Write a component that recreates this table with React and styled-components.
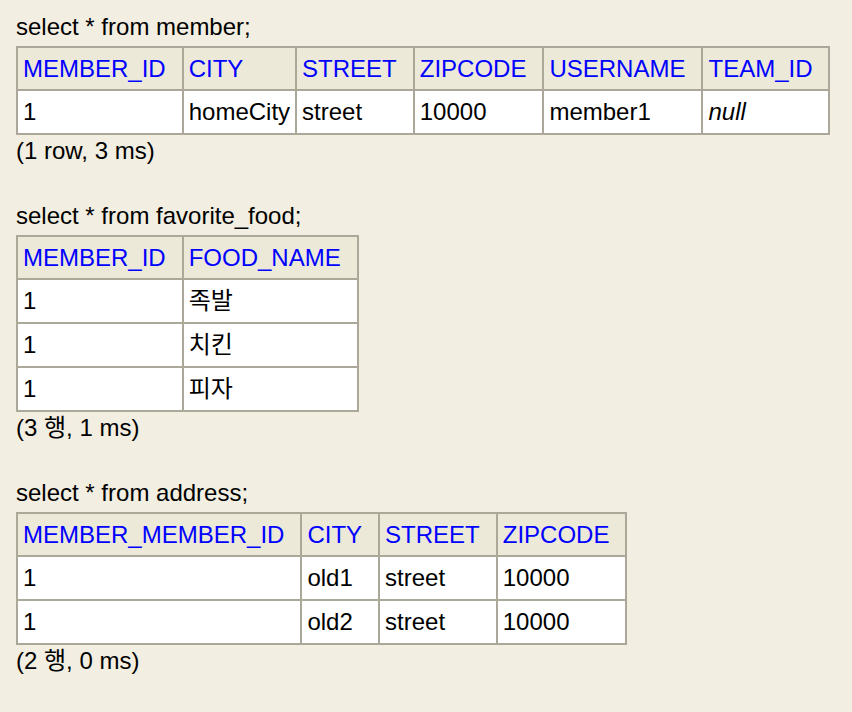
import React from 'react';
import styled, { createGlobalStyle } from 'styled-components';

const GlobalStyle = createGlobalStyle`
  html, body {
    margin: 0;
    padding: 0;
    background: #f2eee1;
  }
  body {
    font-family: "Liberation Sans", Arial, "Noto Sans CJK KR", sans-serif;
    font-size: 24px;
    color: #000;
  }
`;

const Page = styled.div`
  padding: 13px 16px 0;
  min-height: 712px;
  box-sizing: border-box;
`;

const Block = styled.section`
  margin-bottom: 37px;
`;

const Query = styled.div`
  line-height: 28px;
  margin-bottom: 5px;
`;

const Status = styled.div`
  line-height: 28px;
  margin-top: 2px;
`;

const Table = styled.table`
  border-collapse: collapse;
  border: 2px solid #aca899;
`;

const Th = styled.th`
  text-align: left;
  font-weight: normal;
  color: #0000ff;
  background: #ece9d8;
  border: 2px solid #aca899;
  padding: 7px 16px 7px 5px;
  line-height: 27px;
  white-space: nowrap;
`;

const Td = styled.td`
  background: #fff;
  border: 2px solid #aca899;
  padding: 7px 5px;
  line-height: 28px;
  white-space: nowrap;
  font-style: ${({ $null }) => ($null ? 'italic' : 'normal')};
`;

const results = [
  {
    sql: 'select * from member;',
    columns: ['MEMBER_ID', 'CITY', 'STREET', 'ZIPCODE', 'USERNAME', 'TEAM_ID'],
    rows: [['1', 'homeCity', 'street', '10000', 'member1', null]],
    status: '(1 row, 3 ms)',
  },
  {
    sql: 'select * from favorite_food;',
    columns: ['MEMBER_ID', 'FOOD_NAME'],
    rows: [['1', '족발'], ['1', '치킨'], ['1', '피자']],
    status: '(3 행, 1 ms)',
  },
  {
    sql: 'select * from address;',
    columns: ['MEMBER_MEMBER_ID', 'CITY', 'STREET', 'ZIPCODE'],
    rows: [
      ['1', 'old1', 'street', '10000'],
      ['1', 'old2', 'street', '10000'],
    ],
    status: '(2 행, 0 ms)',
  },
];

const ResultBlock = ({ sql, columns, rows, status }) => (
  <Block>
    <Query>{sql}</Query>
    <Table>
      <thead>
        <tr>
          {columns.map((c) => (
            <Th key={c}>{c}</Th>
          ))}
        </tr>
      </thead>
      <tbody>
        {rows.map((r, i) => (
          <tr key={i}>
            {r.map((v, j) => (
              <Td key={j} $null={v === null}>
                {v === null ? 'null' : v}
              </Td>
            ))}
          </tr>
        ))}
      </tbody>
    </Table>
    <Status>{status}</Status>
  </Block>
);

const App = () => (
  <>
    <GlobalStyle />
    <Page>
      {results.map((r) => (
        <ResultBlock key={r.sql} {...r} />
      ))}
    </Page>
  </>
);

export default App;
